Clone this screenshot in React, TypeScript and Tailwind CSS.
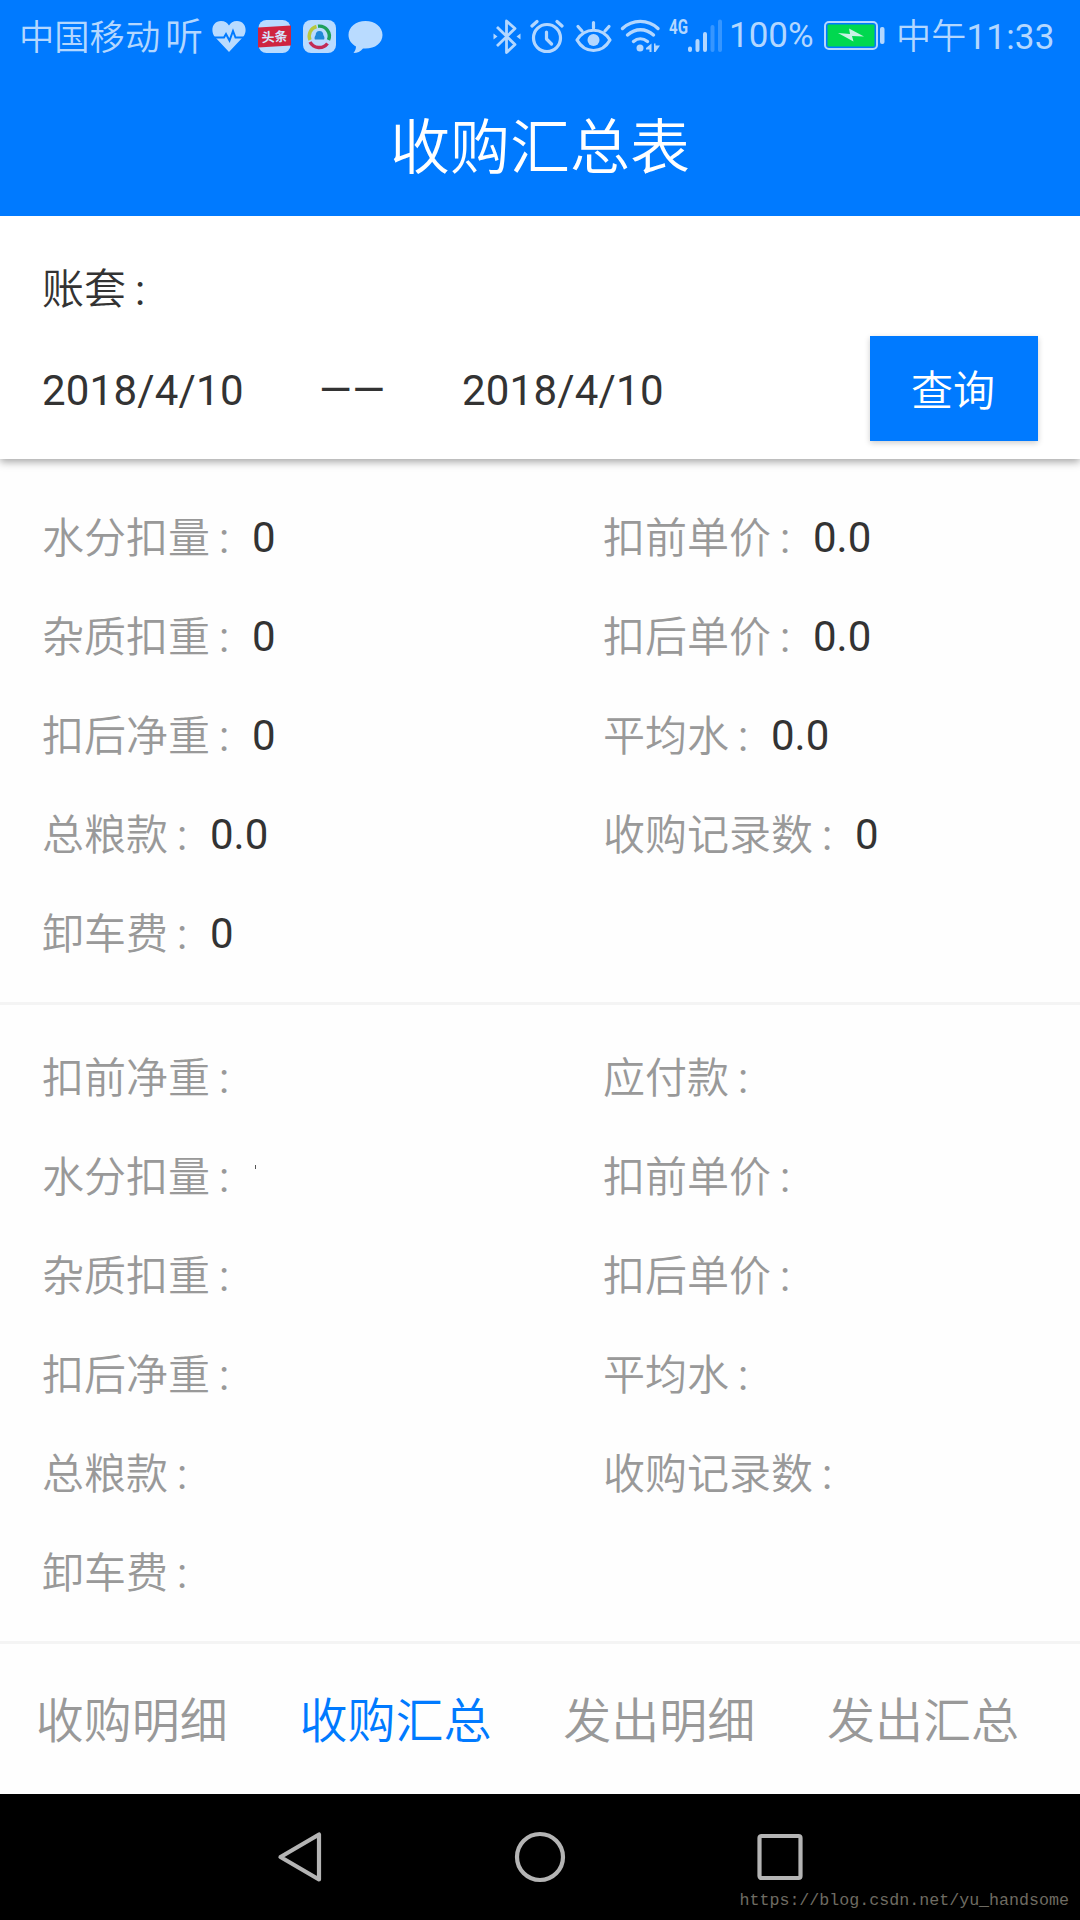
type Entry = { label: string; value?: string; speck?: boolean };

const totals: Entry[] = [
  { label: "水分扣量", value: "0" },
  { label: "扣前单价", value: "0.0" },
  { label: "杂质扣重", value: "0" },
  { label: "扣后单价", value: "0.0" },
  { label: "扣后净重", value: "0" },
  { label: "平均水", value: "0.0" },
  { label: "总粮款", value: "0.0" },
  { label: "收购记录数", value: "0" },
  { label: "卸车费", value: "0" },
];

const details: Entry[] = [
  { label: "扣前净重" },
  { label: "应付款" },
  { label: "水分扣量", speck: true },
  { label: "扣前单价" },
  { label: "杂质扣重" },
  { label: "扣后单价" },
  { label: "扣后净重" },
  { label: "平均水" },
  { label: "总粮款" },
  { label: "收购记录数" },
  { label: "卸车费" },
];

const tabs = ["收购明细", "收购汇总", "发出明细", "发出汇总"];

function Colon() {
  return <span className="inline-block w-[42px] pt-[3px] pl-[9px]">:</span>;
}

function StatusBar() {
  return (
    <div className="flex h-[72px] items-center pl-[19px] text-[35px] leading-[36px] font-[350] text-[#b3d7ff]">
      <span className="w-[144px] pt-[3px] text-[35.3px] whitespace-nowrap">中国移动</span>
      <span className="ml-[2px] w-[38px] pt-px text-[38px]">听</span>

      {/* Health */}
      <svg className="ml-[8px] shrink-0" width="36" height="36" viewBox="0 0 36 36">
        <path d="M18 34 3.500 18.500C-1 12 2 3 10 3c4 0 6.500 2 8 4.500C19.500 5 22 3 26 3c8 0 11 9 6.500 15.500Z" fill="#b9dbff" />
        <path d="M1 19.500h12l2-3.500 3.500 6.500 3.500-9.500 2.500 6.500h11" fill="none" stroke="#007aff" strokeWidth="2" />
      </svg>

      {/* News app */}
      <svg className="ml-[11px] shrink-0" width="33" height="36" viewBox="0 0 33 36">
        <rect x="0.500" y="2" width="32" height="33" rx="8" fill="#b9dbff" />
        <path d="M0 9.500 33 7.500V27.500L0 29.500Z" fill="#cf2340" />
        <text x="16.500" y="23.500" fontSize="13" fontWeight="700" textAnchor="middle" fill="#d5e6ff" transform="rotate(-3 16 18)">头条</text>
      </svg>

      {/* Swirl app */}
      <svg className="ml-[12px] shrink-0" width="33" height="36" viewBox="0 0 33 36">
        <rect x="0" y="2" width="33" height="33" rx="8" fill="#b9dbff" />
        <g fill="none" strokeWidth="3.400">
          <path d="M13.500 8.500A10 10 0 0 0 7 22" stroke="#b9c83f" />
          <path d="M15 8.200A10 10 0 0 1 25.500 22" stroke="#1fa05c" />
          <path d="M7 24a10.500 10.500 0 0 0 17.500 1.500" stroke="#c22b56" />
        </g>
        <path d="M16.500 13c2.800 0 3.800 2 3.800 4 1.200 2 1.500 3.200.8 4.500h-9.200c-.7-1.300-.4-2.500.8-4.500 0-2 1-4 3.800-4Z" fill="#1f88d8" />
      </svg>

      {/* Message */}
      <svg className="ml-[12px] shrink-0" width="35" height="36" viewBox="0 0 35 36">
        <path d="M17.500 3C8 3 .5 9 .5 17c0 5 3 9 7.500 11.500 0 2.500-1 4.500-2.500 6.500 4 0 7-1.500 9.500-4.500 11 1 19.500-5 19.500-13.500C34.500 9 27 3 17.500 3Z" fill="#b9dbff" />
      </svg>

      {/* Bluetooth */}
      <svg className="ml-[110px] shrink-0" width="28" height="36" viewBox="0 0 28 36" fill="none" stroke="currentColor" strokeWidth="2.800">
        <path d="m4 9 18 17.500-8.500 8V3l8.500 7.500L4 28" strokeLinejoin="round" />
        <path d="m.5 15.500 4 3-4 3ZM27.500 15.500l-4 3 4 3Z" fill="currentColor" stroke="none" />
      </svg>

      {/* Alarm */}
      <svg className="ml-[9px] shrink-0" width="34" height="36" viewBox="0 0 34 36" fill="none" stroke="currentColor" strokeWidth="3.200" strokeLinecap="round" strokeLinejoin="round">
        <circle cx="17" cy="20" r="13.500" />
        <path d="M16.500 14v7l5 5M2 8l5-4.500M32 8l-5-4.500" />
      </svg>

      {/* Eye comfort */}
      <svg className="ml-[11px] shrink-0" width="37" height="36" viewBox="0 0 37 36" fill="none" stroke="currentColor" strokeWidth="3.200" strokeLinecap="round">
        <path d="M2 22c8-13 25-13 33 0-8 14-25 14-33 0Z" strokeLinejoin="round" />
        <path d="M18.500 10V4.500M7 13 3 8.500M30 13l4-4.500" />
        <circle cx="18.500" cy="22" r="6" fill="currentColor" stroke="none" />
      </svg>

      {/* Wi-Fi */}
      <svg className="ml-[8px] shrink-0" width="41" height="36" viewBox="0 0 41 36" fill="none" stroke="currentColor" strokeWidth="3.400" strokeLinecap="round">
        <path d="M2.500 10.500c10-9.500 25.500-9.500 35.500 0M7.500 17c8-7 18-7 26 0M13.500 23.500c4-3.500 9.500-3.500 14 0" />
        <circle cx="20" cy="30" r="3.500" fill="currentColor" stroke="none" />
        <path d="M31.500 25.500V34h-2v-2.500h-3.500V30ZM34 25.500h1.500v2h4.500L35.500 34H34Z" fill="currentColor" stroke="none" />
      </svg>

      {/* Cellular */}
      <div className="ml-[8px] flex w-[54px] shrink-0">
        <span className="h-[36px] w-[18px] origin-left scale-x-[0.72] pt-px text-[21px] leading-[17px] font-bold">4G</span>
        <svg className="shrink-0" width="36" height="36" viewBox="18 0 36 36" fill="none" stroke="currentColor" strokeWidth="4" strokeLinecap="round">
          <path d="M21 30.500v1.500M28.500 23v9M36 16v16" />
          <path d="M43.500 9v23M51 3.500V32" opacity="0.300" />
        </svg>
      </div>

      <span className="ml-[6px] w-[86px] pb-px font-normal whitespace-nowrap">100%</span>

      {/* Battery */}
      <svg className="ml-[9px] shrink-0" width="62" height="36" viewBox="0 0 62 36">
        <rect x="1" y="4" width="52" height="27" rx="4" fill="none" stroke="#b3d7ff" strokeWidth="2" />
        <rect x="3.500" y="6.500" width="47" height="22" rx="1" fill="#00d84f" />
        <rect x="56" y="9" width="4.500" height="17" rx="2" fill="#b3d7ff" />
        <path d="m14 15 12 1-1-5.500 15 8-12-.5 1.500 5.500Z" fill="#c9f2e4" />
      </svg>

      <span className="ml-[10px] pt-[4px] tracking-[0.2px] whitespace-nowrap">
        中午<span className="font-normal">11:33</span>
      </span>
    </div>
  );
}

function EntryGrid({ entries }: { entries: Entry[] }) {
  return (
    <div className="grid grid-cols-[561px_1fr] px-[42px]">
      {entries.map((entry, i) => (
        <div key={i} className="flex h-[99px] items-center text-[42px] leading-[50px] text-[#999999]">
          <span className="pt-[2px] font-[350]">{entry.label}</span>
          <Colon />
          {entry.value && <span className="pt-px text-[#333333]">{entry.value}</span>}
          {entry.speck && <span className="mb-[20px] ml-[3px] h-[4px] w-px bg-[#555555]" />}
        </div>
      ))}
    </div>
  );
}

export default function App() {
  return (
    <div className="flex h-[1920px] w-[1080px] flex-col overflow-hidden bg-[#fefefe] font-[Roboto,'Noto_Sans_CJK_SC',sans-serif]">
      <header className="h-[216px] shrink-0 bg-[#007aff]">
        <StatusBar />
        <h1 className="flex h-[144px] items-center justify-center pt-[9px] text-[60px] font-[350] text-white">收购汇总表</h1>
      </header>

      {/* Query form */}
      <section className="relative flex h-[243px] shrink-0 flex-col bg-white px-[42px] text-[42px] leading-[50px] text-[#333333] shadow-[0_3px_8px_rgba(0,0,0,0.35)] [clip-path:inset(0_0_-20px_0)]">
        <div className="flex h-[120px] items-center pt-[27px]">
          <span className="pt-px font-[350]">账套</span>
          <Colon />
        </div>
        <div className="flex h-[105px] items-center">
          <span className="w-[277px] pt-[4px] tracking-[0.2px]">2018/4/10</span>
          <span className="w-[143px] pt-[5px] tracking-[0.5px]">——</span>
          <span className="pt-[4px] tracking-[0.2px]">2018/4/10</span>
          <button className="ml-auto h-[105px] w-[168px] bg-[#007aff] pt-[6px] pr-[2px] font-[350] text-white shadow-[0_2px_6px_rgba(0,0,0,0.2)]">
            查询
          </button>
        </div>
      </section>

      <section className="h-[543px] shrink-0 pt-[29px]">
        <EntryGrid entries={totals} />
      </section>
      <hr className="h-[3px] shrink-0 border-0 bg-[#f4f4f4]" />
      <section className="h-[636px] shrink-0 pt-[23px]">
        <EntryGrid entries={details} />
      </section>
      <hr className="h-[3px] shrink-0 border-0 bg-[#f4f4f4]" />

      {/* Tabs */}
      <nav className="grid h-[150px] shrink-0 grid-cols-4 items-center pt-[6px] pr-[25px] text-center text-[48px] font-[350]">
        {tabs.map((tab) => (
          <a key={tab} className={tab === "收购汇总" ? "text-[#007aff]" : "text-[#999999]"}>
            {tab}
          </a>
        ))}
      </nav>

      {/* System navigation */}
      <footer className="relative flex h-[126px] shrink-0 items-center justify-center gap-[188px] bg-black text-[#b4b4b4]">
        <svg width="52" height="52" viewBox="0 0 52 52" fill="none" stroke="currentColor" strokeWidth="4.200" strokeLinejoin="round">
          <path d="M6.500 26 45 3.500V48.500Z" />
        </svg>
        <svg width="52" height="52" viewBox="0 0 52 52" fill="none" stroke="currentColor" strokeWidth="4.200">
          <circle cx="26" cy="26" r="23" />
        </svg>
        <svg width="52" height="52" viewBox="0 0 52 52" fill="none" stroke="currentColor" strokeWidth="4.200">
          <rect x="5.500" y="5" width="41" height="42" rx="2" />
        </svg>
        <span className="absolute right-[11px] bottom-[9px] font-['Liberation_Mono',monospace] text-[16.65px] leading-[20px] text-[#6e6b62]">
          https://blog.csdn.net/yu_handsome
        </span>
      </footer>
    </div>
  );
}
